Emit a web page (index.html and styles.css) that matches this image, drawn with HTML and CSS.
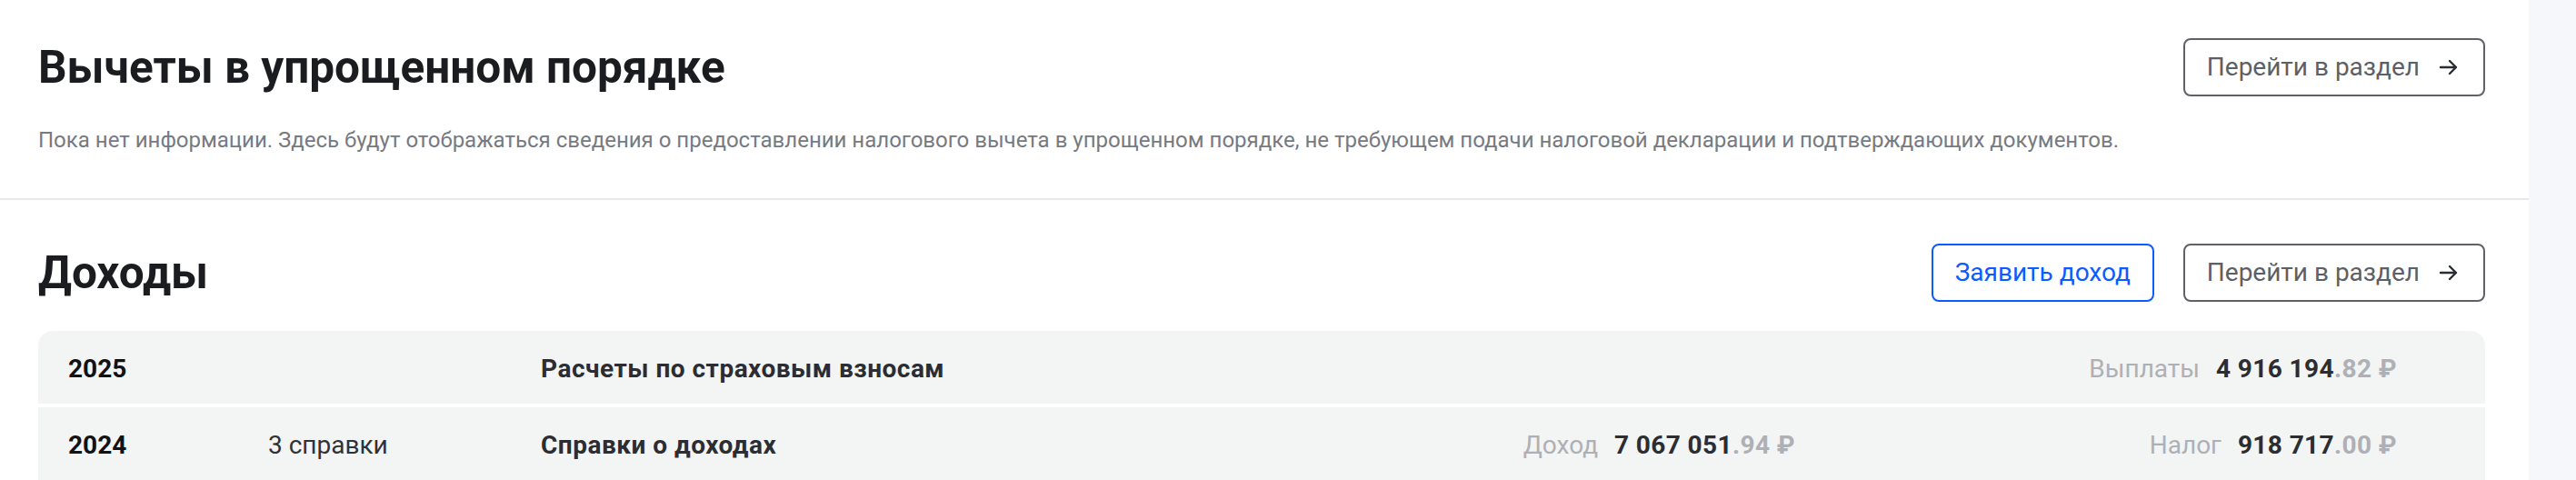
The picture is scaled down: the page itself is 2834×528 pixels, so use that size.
FILE: index.html
```html
<!DOCTYPE html>
<html lang="ru">
<head>
<meta charset="utf-8">
<title>Вычеты и доходы</title>
<link rel="stylesheet" href="styles.css">
</head>
<body>
<div class="layout">
  <main class="panel">
    <section class="section section-first">
      <div class="section-head">
        <h2 class="section-title">Вычеты в упрощенном порядке</h2>
        <div class="actions">
          <button class="btn btn-outline">Перейти в раздел
            <svg class="btn-icon" viewBox="0 0 32 32" aria-hidden="true"><path d="M7 16h17M17 9l7 7-7 7" fill="none" stroke="currentColor" stroke-width="2.4" stroke-linecap="round" stroke-linejoin="round"/></svg>
          </button>
        </div>
      </div>
      <p class="section-text">Пока нет информации. Здесь будут отображаться сведения о предоставлении налогового вычета в упрощенном порядке, не требующем подачи налоговой декларации и подтверждающих документов.</p>
    </section>
    <section class="section section-second">
      <div class="section-head">
        <h2 class="section-title">Доходы</h2>
        <div class="actions">
          <button class="btn btn-primary">Заявить доход</button>
          <button class="btn btn-outline">Перейти в раздел
            <svg class="btn-icon" viewBox="0 0 32 32" aria-hidden="true"><path d="M7 16h17M17 9l7 7-7 7" fill="none" stroke="currentColor" stroke-width="2.4" stroke-linecap="round" stroke-linejoin="round"/></svg>
          </button>
        </div>
      </div>
      <div class="table">
        <div class="row">
          <div class="cell year">2025</div>
          <div class="cell count"></div>
          <div class="cell name">Расчеты по страховым взносам</div>
          <div class="cell sum sum-a"></div>
          <div class="cell sum sum-b"><span class="label">Выплаты</span><span class="value">4&nbsp;916&nbsp;194</span><span class="cents">.82&nbsp;₽</span></div>
        </div>
        <div class="row">
          <div class="cell year">2024</div>
          <div class="cell count">3 справки</div>
          <div class="cell name">Справки о доходах</div>
          <div class="cell sum sum-a"><span class="label">Доход</span><span class="value">7&nbsp;067&nbsp;051</span><span class="cents">.94&nbsp;₽</span></div>
          <div class="cell sum sum-b"><span class="label">Налог</span><span class="value">918&nbsp;717</span><span class="cents">.00&nbsp;₽</span></div>
        </div>
      </div>
    </section>
  </main>
  <aside class="side"></aside>
</div>
</body>
</html>
```
FILE: styles.css
```css
* { box-sizing: border-box; }
html, body { margin: 0; padding: 0; }
body {
  font-family: Roboto, "Noto Sans", "DejaVu Sans", sans-serif;
  background: #f6f7f9;
  color: #1b1c1f;
  overflow: hidden;
}
.layout {
  display: flex;
  min-height: 528px;
}
.panel {
  width: 2782px;
  flex: none;
  background: #ffffff;
}
.side {
  flex: 1;
  background: #f6f7fa;
}
.section {
  padding: 42px 48px 48px 42px;
}
.section-first {
  border-bottom: 2px solid #e6e7e8;
}
.section-second {
  padding-top: 48px;
}
.section-head {
  display: flex;
  align-items: center;
  justify-content: space-between;
  height: 64px;
}
.section-title {
  margin: 0;
  font-size: 49.5px;
  line-height: 56px;
  font-weight: 700;
  color: #1b1c1f;
  letter-spacing: 0;
}
.actions {
  display: flex;
  gap: 32px;
}
.btn {
  display: inline-flex;
  align-items: center;
  height: 64px;
  padding: 0 24px;
  border-radius: 8px;
  background: #fff;
  font-family: inherit;
  font-size: 28px;
  line-height: 32px;
  font-weight: 400;
  cursor: pointer;
}
.btn-outline {
  border: 2px solid #5f6166;
  color: #5c5f66;
  gap: 16px;
  padding-right: 22px;
}
.btn-primary {
  border: 2px solid #0a5cff;
  color: #0a5cff;
}
.btn-icon {
  width: 32px;
  height: 32px;
  color: #2b2d33;
}
.section-text {
  margin: 32px 0 0;
  font-size: 24px;
  line-height: 32px;
  color: #767a82;
}
.table {
  margin-top: 32px;
  display: flex;
  flex-direction: column;
  gap: 4px;
  border-radius: 16px 16px 0 0;
  overflow: hidden;
}
.row {
  display: flex;
  align-items: center;
  height: 80px;
  padding: 3px 97px 0 33px;
  background: #f3f4f4;
  font-size: 28px;
  line-height: 32px;
}
.year {
  width: 220px;
  font-weight: 700;
  color: #111214;
}
.count {
  width: 300px;
  color: #303236;
}
.name {
  flex: 1;
  font-weight: 700;
  color: #2b2d33;
  letter-spacing: 0.5px;
}
.sum {
  display: flex;
  justify-content: flex-end;
  align-items: baseline;
  white-space: nowrap;
}
.sum-a { width: 400px; }
.sum-b { width: 662px; }
.label {
  color: #aeb0b5;
  margin-right: 18px;
}
.value {
  font-weight: 700;
  color: #2b2d33;
  letter-spacing: 0.4px;
}
.cents {
  font-weight: 700;
  color: #aeb0b5;
  letter-spacing: 0.4px;
}
```
